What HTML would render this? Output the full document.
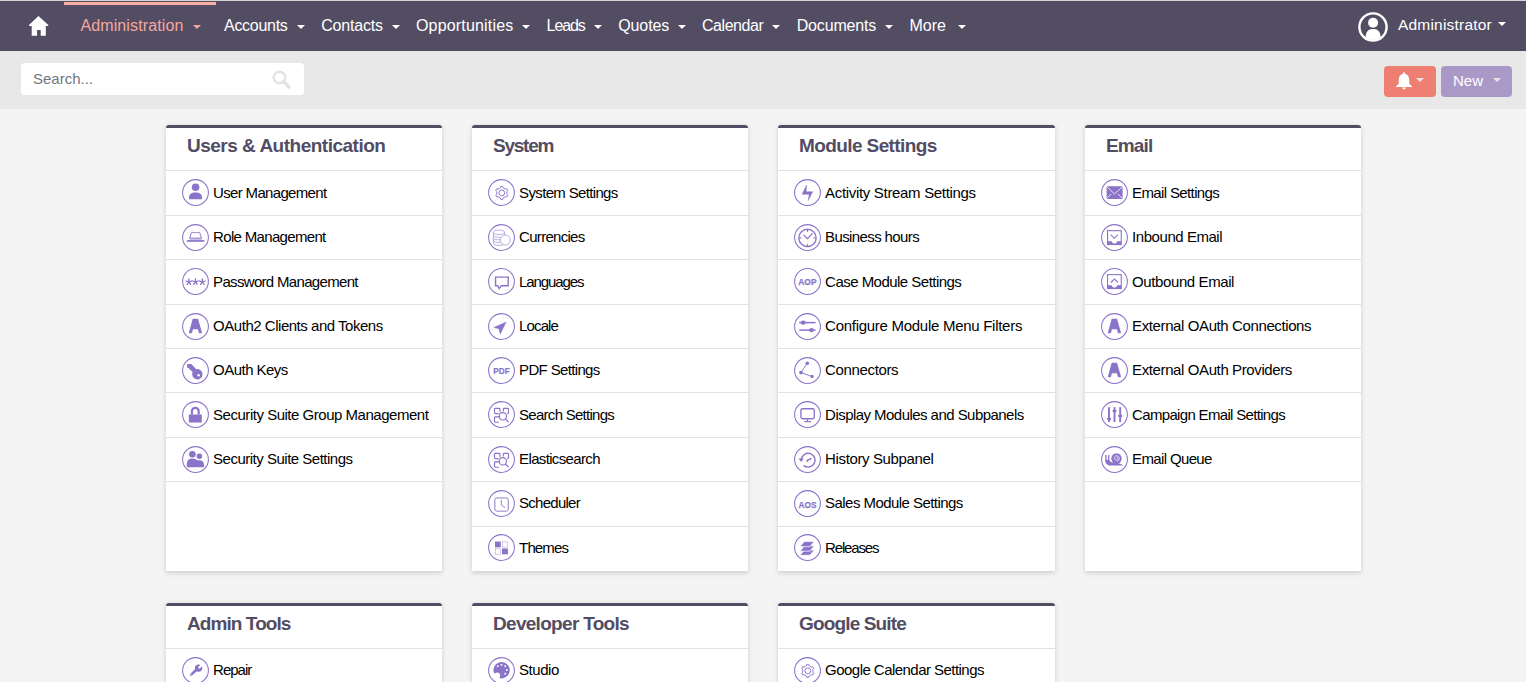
<!DOCTYPE html>
<html><head><meta charset="utf-8"><style>
*{box-sizing:border-box;margin:0;padding:0}
html,body{width:1526px;height:682px;overflow:hidden;background:#f4f4f4;font-family:"Liberation Sans",sans-serif}
#topline{position:absolute;left:0;top:0;width:1526px;height:1px;background:#d6d5d1}
#nav{position:absolute;left:0;top:1px;width:1526px;height:50px;background:#534d64}
#ul{position:absolute;left:64px;top:1px;width:152px;height:3px;background:#f9aea4}
.nt{position:absolute;top:15.4px;font-size:16px;line-height:20px;color:#fff;white-space:nowrap}
.nt.act{color:#f5a79d}
.caret{position:absolute;top:23.5px;width:0;height:0;border-left:4px solid transparent;border-right:4px solid transparent;border-top:4.5px solid #fff}
.caret.act{border-top-color:#f5a79d}
#home{position:absolute;left:29px;top:14px}
#user{position:absolute;left:1357px;top:10px}
#uname{position:absolute;left:1398px;top:13.5px;font-size:15.5px;letter-spacing:0.2px;line-height:20px;color:#fff;white-space:nowrap}
#ucaret{position:absolute;left:1498px;top:21px;border-left:4px solid transparent;border-right:4px solid transparent;border-top:4.5px solid #fff}
#bar{position:absolute;left:0;top:51px;width:1526px;height:57.5px;background:#e8e8e8}
#search{position:absolute;left:21px;top:63px;width:283px;height:32px;background:#fff;border-radius:4px}
#stext{position:absolute;left:12px;top:6px;font-size:15px;line-height:20px;color:#717680}
#sicon{position:absolute;left:251px;top:7px}
#bell{position:absolute;left:1384px;top:66px;width:52px;height:31px;background:#ef7f73;border-radius:4px}
#new{position:absolute;left:1441px;top:66px;width:71px;height:31px;background:#aa99c7;border-radius:4px}
#newt{position:absolute;left:12px;top:5px;font-size:15px;line-height:20px;color:#fff}
.bcaret{position:absolute;top:12px;border-left:4px solid transparent;border-right:4px solid transparent;border-top:4px solid #e6e6e6}
.card{position:absolute;background:#fff;border-top:3px solid #534d64;border-radius:3px 3px 0 0;box-shadow:0 1.5px 5px rgba(0,0,0,.16)}
.ct{position:absolute;left:21px;top:7.1px;font-size:19px;line-height:22px;letter-spacing:-0.5px;font-weight:700;color:#534d64;white-space:nowrap}
.sep{position:absolute;left:0;width:100%;height:1px;background:#dee2e6;margin-top:-3px}
.ic{position:absolute;left:16.2px;width:27px;height:27px;margin-top:-3px}
.ic svg{display:block}
.rt{position:absolute;left:47.1px;font-size:15px;line-height:20px;color:#000;white-space:nowrap;margin-top:-3px}
</style></head><body>
<div id="topline"></div>
<div id="nav">
<div id="ul"></div>
<svg id="home" width="20" height="21" viewBox="0 0 20 21"><path d="M9.5 1.1 L19.3 10 L19.3 10.9 L16.8 10.9 L16.8 20.8 L11.7 20.8 L11.7 15 L8.1 15 L8.1 20.8 L2.7 20.8 L2.7 10.9 L0 10.9 L0 10 Z" fill="#fff"/></svg>
<div class="nt act" style="left:80.4px;letter-spacing:0.12px">Administration</div><div class="caret act" style="left:192.5px"></div><div class="nt" style="left:224px;letter-spacing:-0.28px">Accounts</div><div class="caret" style="left:297px"></div><div class="nt" style="left:321.2px;letter-spacing:-0.2px">Contacts</div><div class="caret" style="left:392.3px"></div><div class="nt" style="left:416px;letter-spacing:0.17px">Opportunities</div><div class="caret" style="left:522.3px"></div><div class="nt" style="left:546.6px;letter-spacing:-1.1px">Leads</div><div class="caret" style="left:594px"></div><div class="nt" style="left:618.2px;letter-spacing:-0.1px">Quotes</div><div class="caret" style="left:678px"></div><div class="nt" style="left:702px;letter-spacing:-0.45px">Calendar</div><div class="caret" style="left:771.8px"></div><div class="nt" style="left:796.7px;letter-spacing:-0.16px">Documents</div><div class="caret" style="left:884.6px"></div><div class="nt" style="left:909.5px;letter-spacing:0px">More</div><div class="caret" style="left:958px"></div>
<svg id="user" width="32" height="32" viewBox="0 0 32 32"><circle cx="16" cy="16" r="13.6" fill="none" stroke="#fff" stroke-width="2.4"/><circle cx="16.1" cy="11.8" r="5" fill="#fff"/><path d="M8.6 26 C8.8 20.5 11.5 17.9 16.1 17.9 C20.7 17.9 23.4 20.5 23.6 26 C21.5 28 19 29 16.1 29 C13.2 29 10.7 28 8.6 26 Z" fill="#fff"/></svg>
<div id="uname">Administrator</div><div id="ucaret"></div>
</div>
<div id="bar"></div>
<div id="search"><div id="stext">Search...</div>
<svg id="sicon" width="20" height="20" viewBox="0 0 20 20"><circle cx="7.5" cy="7.5" r="5.8" fill="none" stroke="#e3e3e3" stroke-width="2.4"/><path d="M11.5 11.5 L17 17" stroke="#e3e3e3" stroke-width="3.4" stroke-linecap="round"/></svg>
</div>
<div id="bell"><svg style="position:absolute;left:11px;top:5.7px" width="18" height="18" viewBox="0 0 18 18"><path d="M9 0.3 C9.9 0.3 10.2 1.2 10.2 2 C13.2 2.7 14.3 5.3 14.3 8.5 L14.3 11.8 L17 14.3 Q17.3 14.9 16.6 15 L1.4 15 Q0.7 14.9 1 14.3 L3.7 11.8 L3.7 8.5 C3.7 5.3 4.8 2.7 7.8 2 C7.8 1.2 8.1 0.3 9 0.3 Z M7.3 15.6 L10.7 15.6 C10.7 16.8 10 17.4 9 17.4 C8 17.4 7.3 16.8 7.3 15.6Z" fill="#fff"/></svg><div class="bcaret" style="left:32px"></div></div>
<div id="new"><div id="newt">New</div><div class="bcaret" style="left:52px"></div></div>
<div class="card" style="left:166px;top:125px;width:276px;height:446px">
<div class="ct" style="letter-spacing:-0.50px">Users &amp; Authentication</div>
<div class="sep" style="top:45px"></div>
<div class="ic" style="top:54.00px"><svg width="27" height="27" viewBox="0 0 27 27"><circle cx="13.5" cy="13.5" r="12.9" fill="none" stroke="#8a73c9" stroke-width="1.05"/><circle cx="13.6" cy="8.3" r="3.8" fill="#8a73c9"/><path d="M7 20.3 L7 18.5 C7 15.3 9.3 13.4 13.6 13.4 C17.8 13.4 20 15.3 20 18.5 L20 20.3 Z" fill="#8a73c9"/></svg></div>
<div class="rt" style="top:58.00px;letter-spacing:-0.671px">User Management</div>
<div class="sep" style="top:90px"></div>
<div class="ic" style="top:99.00px"><svg width="27" height="27" viewBox="0 0 27 27"><circle cx="13.5" cy="13.5" r="12.9" fill="none" stroke="#8a73c9" stroke-width="1.05"/><path d="M7.7 14.2 L9.3 8.9 Q9.5 8.3 10.2 8.3 L12.4 8.5 Q13.5 9.2 14.6 8.5 L16.9 8.3 Q17.6 8.3 17.8 8.9 L19.4 14.2" fill="none" stroke="#8a73c9" stroke-width="0.95"/><rect x="7.4" y="14.2" width="12.3" height="2" fill="#8a73c9" opacity="0.45"/><line x1="7.4" y1="14.1" x2="19.7" y2="14.1" stroke="#8a73c9" stroke-width="0.9"/><rect x="4.8" y="16.1" width="17.6" height="1.7" fill="#8a73c9"/></svg></div>
<div class="rt" style="top:102.00px;letter-spacing:-0.672px">Role Management</div>
<div class="sep" style="top:134px"></div>
<div class="ic" style="top:143.00px"><svg width="27" height="27" viewBox="0 0 27 27"><circle cx="13.5" cy="13.5" r="12.9" fill="none" stroke="#8a73c9" stroke-width="1.05"/><line x1="6.9" y1="13.9" x2="6.90" y2="10.90" stroke="#8a73c9" stroke-width="1.25" stroke-linecap="round"/><line x1="6.9" y1="13.9" x2="9.75" y2="12.97" stroke="#8a73c9" stroke-width="1.25" stroke-linecap="round"/><line x1="6.9" y1="13.9" x2="8.66" y2="16.33" stroke="#8a73c9" stroke-width="1.25" stroke-linecap="round"/><line x1="6.9" y1="13.9" x2="5.14" y2="16.33" stroke="#8a73c9" stroke-width="1.25" stroke-linecap="round"/><line x1="6.9" y1="13.9" x2="4.05" y2="12.97" stroke="#8a73c9" stroke-width="1.25" stroke-linecap="round"/><line x1="13.5" y1="13.9" x2="13.50" y2="10.90" stroke="#8a73c9" stroke-width="1.25" stroke-linecap="round"/><line x1="13.5" y1="13.9" x2="16.35" y2="12.97" stroke="#8a73c9" stroke-width="1.25" stroke-linecap="round"/><line x1="13.5" y1="13.9" x2="15.26" y2="16.33" stroke="#8a73c9" stroke-width="1.25" stroke-linecap="round"/><line x1="13.5" y1="13.9" x2="11.74" y2="16.33" stroke="#8a73c9" stroke-width="1.25" stroke-linecap="round"/><line x1="13.5" y1="13.9" x2="10.65" y2="12.97" stroke="#8a73c9" stroke-width="1.25" stroke-linecap="round"/><line x1="20.3" y1="13.9" x2="20.30" y2="10.90" stroke="#8a73c9" stroke-width="1.25" stroke-linecap="round"/><line x1="20.3" y1="13.9" x2="23.15" y2="12.97" stroke="#8a73c9" stroke-width="1.25" stroke-linecap="round"/><line x1="20.3" y1="13.9" x2="22.06" y2="16.33" stroke="#8a73c9" stroke-width="1.25" stroke-linecap="round"/><line x1="20.3" y1="13.9" x2="18.54" y2="16.33" stroke="#8a73c9" stroke-width="1.25" stroke-linecap="round"/><line x1="20.3" y1="13.9" x2="17.45" y2="12.97" stroke="#8a73c9" stroke-width="1.25" stroke-linecap="round"/></svg></div>
<div class="rt" style="top:147.00px;letter-spacing:-0.678px">Password Management</div>
<div class="sep" style="top:179px"></div>
<div class="ic" style="top:188.00px"><svg width="27" height="27" viewBox="0 0 27 27"><circle cx="13.5" cy="13.5" r="12.9" fill="none" stroke="#8a73c9" stroke-width="1.05"/><g transform="translate(0,-0.45)"><path d="M10.7 6.2 L16 6.2 L19.9 19.6 Q20.1 20.8 19 20.8 L17.8 20.8 Q16.9 20.8 16.7 20 L16 16.6 L10.9 16.6 L10.1 20 Q9.9 20.8 9 20.8 L7.9 20.8 Q6.8 20.8 7 19.6 Z" fill="#8a73c9"/></g></svg></div>
<div class="rt" style="top:191.00px;letter-spacing:-0.475px">OAuth2 Clients and Tokens</div>
<div class="sep" style="top:223px"></div>
<div class="ic" style="top:232.00px"><svg width="27" height="27" viewBox="0 0 27 27"><circle cx="13.5" cy="13.5" r="12.9" fill="none" stroke="#8a73c9" stroke-width="1.05"/><path d="M5.13 6.98 L9.3 6.98 L14.2 12.2 A5.2 5.2 0 1 1 10.6 15.1 L8 12.5 L7.1 12.5 L7.1 11 L5.13 10.75 Z" fill="#8a73c9"/><circle cx="16.58" cy="18.2" r="1.25" fill="#fff"/></svg></div>
<div class="rt" style="top:235.00px;letter-spacing:-0.533px">OAuth Keys</div>
<div class="sep" style="top:267px"></div>
<div class="ic" style="top:276.00px"><svg width="27" height="27" viewBox="0 0 27 27"><circle cx="13.5" cy="13.5" r="12.9" fill="none" stroke="#8a73c9" stroke-width="1.05"/><rect x="6.8" y="13.4" width="13" height="8" fill="#8a73c9" rx="0.3"/><path d="M9.9 13.6 V10.2 A3.4 3.4 0 0 1 16.7 10.2 V13.6" fill="none" stroke="#8a73c9" stroke-width="2.2"/></svg></div>
<div class="rt" style="top:280.00px;letter-spacing:-0.48px">Security Suite Group Management</div>
<div class="sep" style="top:312px"></div>
<div class="ic" style="top:321.00px"><svg width="27" height="27" viewBox="0 0 27 27"><circle cx="13.5" cy="13.5" r="12.9" fill="none" stroke="#8a73c9" stroke-width="1.05"/><circle cx="10.4" cy="8.3" r="3.3" fill="#8a73c9"/><circle cx="17.4" cy="10.3" r="2.75" fill="#8a73c9"/><path d="M4.8 20.5 L4.8 18.3 C4.8 14.5 7 12.5 10.4 12.5 C12.8 12.5 14.4 13.4 15.4 14.6 C16 14.4 16.7 14.3 17.4 14.3 C20.3 14.3 22 16.2 22 18.8 L22 20.5 Q22 21.3 21.2 21.3 L5.6 21.3 Q4.8 21.3 4.8 20.5 Z" fill="#8a73c9"/></svg></div>
<div class="rt" style="top:324.00px;letter-spacing:-0.5px">Security Suite Settings</div>
<div class="sep" style="top:356px"></div>
</div><div class="card" style="left:472px;top:125px;width:276px;height:446px">
<div class="ct" style="letter-spacing:-1.24px">System</div>
<div class="sep" style="top:45px"></div>
<div class="ic" style="top:54.00px"><svg width="27" height="27" viewBox="0 0 27 27"><circle cx="13.5" cy="13.5" r="12.9" fill="none" stroke="#8a73c9" stroke-width="1.05"/><path d="M12.43 8.78 L12.78 7.48 L14.82 7.48 L15.17 8.78 L17.55 10.15 L18.85 9.81 L19.87 11.57 L18.92 12.53 L18.92 15.27 L19.87 16.23 L18.85 17.99 L17.55 17.65 L15.17 19.02 L14.82 20.32 L12.78 20.32 L12.43 19.02 L10.05 17.65 L8.75 17.99 L7.73 16.23 L8.68 15.27 L8.68 12.53 L7.73 11.57 L8.75 9.81 L10.05 10.15Z" fill="none" stroke="#8a73c9" stroke-width="0.95" stroke-linejoin="round"/><circle cx="13.8" cy="13.9" r="2.9" fill="none" stroke="#8a73c9" stroke-width="0.95"/></svg></div>
<div class="rt" style="top:58.00px;letter-spacing:-0.657px">System Settings</div>
<div class="sep" style="top:90px"></div>
<div class="ic" style="top:99.00px"><svg width="27" height="27" viewBox="0 0 27 27"><circle cx="13.5" cy="13.5" r="12.9" fill="none" stroke="#8a73c9" stroke-width="1.05"/><g fill="none" stroke="#8a73c9" stroke-width="0.65" opacity="0.85"><ellipse cx="11" cy="8.3" rx="5.6" ry="2.3"/><path d="M5.4 8.3 V19.2 C5.4 20.5 7.9 21.4 11 21.4 C12.5 21.4 13.8 21.2 14.8 20.8"/><path d="M5.4 11 C5.4 12.3 7.9 13.3 11 13.3 C11.6 13.3 12.2 13.25 12.8 13.2"/><path d="M5.4 13.7 C5.4 15 7.9 15.9 11 15.9 L12 15.9"/><path d="M5.4 16.4 C5.4 17.7 7.9 18.6 11 18.6 L12.3 18.6"/><path d="M16.6 8.3 V11"/><circle cx="17.3" cy="16.1" r="5"/></g></svg></div>
<div class="rt" style="top:102.00px;letter-spacing:-0.711px">Currencies</div>
<div class="sep" style="top:134px"></div>
<div class="ic" style="top:143.00px"><svg width="27" height="27" viewBox="0 0 27 27"><circle cx="13.5" cy="13.5" r="12.9" fill="none" stroke="#8a73c9" stroke-width="1.05"/><path d="M7.55 9.1 H20.2 V17.8 H13.3 L11.2 20.6 L9.6 17.8 H7.55 Z" fill="none" stroke="#8a73c9" stroke-width="1.4" stroke-linejoin="miter"/></svg></div>
<div class="rt" style="top:147.00px;letter-spacing:-1.1px">Languages</div>
<div class="sep" style="top:179px"></div>
<div class="ic" style="top:188.00px"><svg width="27" height="27" viewBox="0 0 27 27"><circle cx="13.5" cy="13.5" r="12.9" fill="none" stroke="#8a73c9" stroke-width="1.05"/><path d="M18.1 8.9 L5.8 14.6 L11 15.8 L12.2 21.2 Z" fill="#8a73c9" stroke="#8a73c9" stroke-width="0.4" stroke-linejoin="round"/></svg></div>
<div class="rt" style="top:191.00px;letter-spacing:-0.88px">Locale</div>
<div class="sep" style="top:223px"></div>
<div class="ic" style="top:232.00px"><svg width="27" height="27" viewBox="0 0 27 27"><circle cx="13.5" cy="13.5" r="12.9" fill="none" stroke="#8a73c9" stroke-width="1.05"/><text x="13.5" y="16.5" text-anchor="middle" font-family="Liberation Sans" font-weight="700" font-size="9.2" fill="#8a73c9" stroke="#8a73c9" stroke-width="0.2" textLength="16.4" lengthAdjust="spacingAndGlyphs">PDF</text></svg></div>
<div class="rt" style="top:235.00px;letter-spacing:-0.654px">PDF Settings</div>
<div class="sep" style="top:267px"></div>
<div class="ic" style="top:276.00px"><svg width="27" height="27" viewBox="0 0 27 27"><circle cx="13.5" cy="13.5" r="12.9" fill="none" stroke="#8a73c9" stroke-width="1.05"/><g fill="none" stroke="#8a73c9" stroke-width="1.15"><path d="M12 11.3 V8.2 Q12 7.3 11.1 7.3 H7.4 Q6.5 7.3 6.5 8.2 V11.7 Q6.5 12.6 7.4 12.6 H10.6"/><path d="M15.3 10.4 V8.2 Q15.3 7.3 16.2 7.3 H19.6 Q20.5 7.3 20.5 8.2 V11.7 Q20.5 12.6 19.6 12.6 H19.3"/><path d="M12.2 15.9 H7.4 Q6.5 15.9 6.5 16.8 V20.3 Q6.5 21.2 7.4 21.2 H10.8"/><circle cx="14.8" cy="15.3" r="3.7"/><line x1="17.5" y1="18" x2="20.5" y2="21"/></g></svg></div>
<div class="rt" style="top:280.00px;letter-spacing:-0.728px">Search Settings</div>
<div class="sep" style="top:312px"></div>
<div class="ic" style="top:321.00px"><svg width="27" height="27" viewBox="0 0 27 27"><circle cx="13.5" cy="13.5" r="12.9" fill="none" stroke="#8a73c9" stroke-width="1.05"/><g fill="none" stroke="#8a73c9" stroke-width="1.15"><path d="M12 11.3 V8.2 Q12 7.3 11.1 7.3 H7.4 Q6.5 7.3 6.5 8.2 V11.7 Q6.5 12.6 7.4 12.6 H10.6"/><path d="M15.3 10.4 V8.2 Q15.3 7.3 16.2 7.3 H19.6 Q20.5 7.3 20.5 8.2 V11.7 Q20.5 12.6 19.6 12.6 H19.3"/><path d="M12.2 15.9 H7.4 Q6.5 15.9 6.5 16.8 V20.3 Q6.5 21.2 7.4 21.2 H10.8"/><circle cx="14.8" cy="15.3" r="3.7"/><line x1="17.5" y1="18" x2="20.5" y2="21"/></g></svg></div>
<div class="rt" style="top:324.00px;letter-spacing:-0.65px">Elasticsearch</div>
<div class="sep" style="top:356px"></div>
<div class="ic" style="top:365.00px"><svg width="27" height="27" viewBox="0 0 27 27"><circle cx="13.5" cy="13.5" r="12.9" fill="none" stroke="#8a73c9" stroke-width="1.05"/><rect x="6.85" y="7.95" width="13.4" height="13.2" rx="1.9" fill="none" stroke="#8a73c9" stroke-width="0.95"/><path d="M13.3 9.9 V15 L17.2 17.8" fill="none" stroke="#8a73c9" stroke-width="0.9"/></svg></div>
<div class="rt" style="top:368.00px;letter-spacing:-0.75px">Scheduler</div>
<div class="sep" style="top:401px"></div>
<div class="ic" style="top:409.00px"><svg width="27" height="27" viewBox="0 0 27 27"><circle cx="13.5" cy="13.5" r="12.9" fill="none" stroke="#8a73c9" stroke-width="1.05"/><g transform="translate(0,-0.5)"><rect x="7" y="8" width="5.8" height="5.8" fill="#8a73c9"/><rect x="14.3" y="8.3" width="5.3" height="5.3" fill="none" stroke="#8a73c9" stroke-width="0.6" opacity="0.65"/><rect x="7.3" y="15.3" width="5.3" height="5.4" fill="none" stroke="#8a73c9" stroke-width="0.6" opacity="0.65"/><rect x="14" y="15" width="5.9" height="5.8" fill="#8a73c9"/></g></svg></div>
<div class="rt" style="top:413.00px;letter-spacing:-0.88px">Themes</div>
</div><div class="card" style="left:778px;top:125px;width:277px;height:446px">
<div class="ct" style="letter-spacing:-0.60px">Module Settings</div>
<div class="sep" style="top:45px"></div>
<div class="ic" style="top:54.00px"><svg width="27" height="27" viewBox="0 0 27 27"><circle cx="13.5" cy="13.5" r="12.9" fill="none" stroke="#8a73c9" stroke-width="1.05"/><path d="M12.5 6.2 L8 15.2 L15.2 15.2 L14.2 21.5 L18.7 12.7 L12.2 12.7 Z" fill="#8a73c9" stroke="#8a73c9" stroke-width="0.45" stroke-linejoin="round"/></svg></div>
<div class="rt" style="top:58.00px;letter-spacing:-0.322px">Activity Stream Settings</div>
<div class="sep" style="top:90px"></div>
<div class="ic" style="top:99.00px"><svg width="27" height="27" viewBox="0 0 27 27"><circle cx="13.5" cy="13.5" r="12.9" fill="none" stroke="#8a73c9" stroke-width="1.05"/><circle cx="13.5" cy="13.9" r="8.65" fill="none" stroke="#8a73c9" stroke-width="1.3"/><g stroke="#8a73c9" stroke-width="1.2"><line x1="13.5" y1="5.5" x2="13.5" y2="7.8"/><line x1="13.5" y1="20" x2="13.5" y2="22.3"/><line x1="5.1" y1="13.9" x2="7.4" y2="13.9"/><line x1="19.6" y1="13.9" x2="21.9" y2="13.9"/></g><path d="M9.6 10.9 L13.4 14.6 L18.6 9.4" fill="none" stroke="#8a73c9" stroke-width="1.3"/></svg></div>
<div class="rt" style="top:102.00px;letter-spacing:-0.615px">Business hours</div>
<div class="sep" style="top:134px"></div>
<div class="ic" style="top:143.00px"><svg width="27" height="27" viewBox="0 0 27 27"><circle cx="13.5" cy="13.5" r="12.9" fill="none" stroke="#8a73c9" stroke-width="1.05"/><text x="13.4" y="16.5" text-anchor="middle" font-family="Liberation Sans" font-weight="700" font-size="9" fill="#8a73c9" stroke="#8a73c9" stroke-width="0.25" textLength="18.2" lengthAdjust="spacingAndGlyphs">AOP</text></svg></div>
<div class="rt" style="top:147.00px;letter-spacing:-0.526px">Case Module Settings</div>
<div class="sep" style="top:179px"></div>
<div class="ic" style="top:188.00px"><svg width="27" height="27" viewBox="0 0 27 27"><circle cx="13.5" cy="13.5" r="12.9" fill="none" stroke="#8a73c9" stroke-width="1.05"/><g transform="translate(0,-0.6)"><g stroke="#8a73c9" stroke-width="1.5" fill="#8a73c9"><line x1="5.2" y1="10.2" x2="21.6" y2="10.2"/><line x1="5.2" y1="17.7" x2="21.6" y2="17.7"/></g><ellipse cx="9.2" cy="10.2" rx="2.4" ry="2.2" fill="#8a73c9"/><ellipse cx="17.5" cy="17.7" rx="2.4" ry="2.2" fill="#8a73c9"/></g></svg></div>
<div class="rt" style="top:191.00px;letter-spacing:-0.278px">Configure Module Menu Filters</div>
<div class="sep" style="top:223px"></div>
<div class="ic" style="top:232.00px"><svg width="27" height="27" viewBox="0 0 27 27"><circle cx="13.5" cy="13.5" r="12.9" fill="none" stroke="#8a73c9" stroke-width="1.05"/><g stroke="#8a73c9" stroke-width="0.95"><line x1="13.3" y1="6.3" x2="6.9" y2="15.6"/><line x1="6.9" y1="15.6" x2="18.1" y2="19.5"/></g><circle cx="13.3" cy="6.3" r="1.8" fill="#8a73c9"/><circle cx="6.9" cy="15.6" r="1.8" fill="#8a73c9"/><circle cx="18.1" cy="19.5" r="1.65" fill="#8a73c9"/></svg></div>
<div class="rt" style="top:235.00px;letter-spacing:-0.355px">Connectors</div>
<div class="sep" style="top:267px"></div>
<div class="ic" style="top:276.00px"><svg width="27" height="27" viewBox="0 0 27 27"><circle cx="13.5" cy="13.5" r="12.9" fill="none" stroke="#8a73c9" stroke-width="1.05"/><rect x="6.9" y="7.75" width="13.4" height="10" rx="1.8" fill="none" stroke="#8a73c9" stroke-width="1.35"/><line x1="13.5" y1="17.8" x2="13.5" y2="20.3" stroke="#8a73c9" stroke-width="1.1"/><line x1="10.2" y1="20.6" x2="17" y2="20.6" stroke="#8a73c9" stroke-width="1.2"/></svg></div>
<div class="rt" style="top:280.00px;letter-spacing:-0.543px">Display Modules and Subpanels</div>
<div class="sep" style="top:312px"></div>
<div class="ic" style="top:321.00px"><svg width="27" height="27" viewBox="0 0 27 27"><circle cx="13.5" cy="13.5" r="12.9" fill="none" stroke="#8a73c9" stroke-width="1.05"/><path d="M7.3 13.2 A6.9 6.9 0 1 1 9.6 19.4" fill="none" stroke="#8a73c9" stroke-width="1.4"/><path d="M4.6 12.4 L9.6 12.4 L7.2 16 Z" fill="#8a73c9"/><path d="M12.9 16 L13.3 14.3 L17.5 12.3" fill="none" stroke="#8a73c9" stroke-width="1.4"/></svg></div>
<div class="rt" style="top:324.00px;letter-spacing:-0.373px">History Subpanel</div>
<div class="sep" style="top:356px"></div>
<div class="ic" style="top:365.00px"><svg width="27" height="27" viewBox="0 0 27 27"><circle cx="13.5" cy="13.5" r="12.9" fill="none" stroke="#8a73c9" stroke-width="1.05"/><text x="13.5" y="17.6" text-anchor="middle" font-family="Liberation Sans" font-weight="700" font-size="9" fill="#8a73c9" stroke="#8a73c9" stroke-width="0.25" textLength="17.8" lengthAdjust="spacingAndGlyphs">AOS</text></svg></div>
<div class="rt" style="top:368.00px;letter-spacing:-0.55px">Sales Module Settings</div>
<div class="sep" style="top:401px"></div>
<div class="ic" style="top:409.00px"><svg width="27" height="27" viewBox="0 0 27 27"><circle cx="13.5" cy="13.5" r="12.9" fill="none" stroke="#8a73c9" stroke-width="1.05"/><g fill="#8a73c9" stroke="#fff" stroke-width="0.75"><path d="M6 21.3 L15.9 21.3 L20.3 16 L10.4 16 Z"/><path d="M6 17.2 L15.9 17.2 L20.3 11.8 L10.4 11.8 Z"/><path d="M6 12.7 L15.9 12.7 L20.3 7.4 L10.4 7.4 Z"/></g></svg></div>
<div class="rt" style="top:413.00px;letter-spacing:-1.171px">Releases</div>
</div><div class="card" style="left:1085px;top:125px;width:276px;height:446px">
<div class="ct" style="letter-spacing:-0.88px">Email</div>
<div class="sep" style="top:45px"></div>
<div class="ic" style="top:54.00px"><svg width="27" height="27" viewBox="0 0 27 27"><circle cx="13.5" cy="13.5" r="12.9" fill="none" stroke="#8a73c9" stroke-width="1.05"/><rect x="5.6" y="7.2" width="16" height="12.9" rx="0.9" fill="#8a73c9"/><g stroke="#fff" stroke-width="0.8" fill="none"><path d="M5.8 7.8 L13.5 14.9 L21.4 7.8"/><line x1="5.8" y1="19.4" x2="10.2" y2="15"/><line x1="21.4" y1="19.4" x2="17" y2="15"/></g></svg></div>
<div class="rt" style="top:58.00px;letter-spacing:-0.631px">Email Settings</div>
<div class="sep" style="top:90px"></div>
<div class="ic" style="top:99.00px"><svg width="27" height="27" viewBox="0 0 27 27"><circle cx="13.5" cy="13.5" r="12.9" fill="none" stroke="#8a73c9" stroke-width="1.05"/><rect x="6.55" y="6.65" width="13.7" height="13.9" fill="none" stroke="#8a73c9" stroke-width="1.1"/><path d="M6.5 17.3 H10.6 C11.2 19 12 19.6 13.4 19.6 C14.8 19.6 15.6 19 16.2 17.3 H20.3 V21 H6.5 Z" fill="#8a73c9"/><path d="M9.75 10.7 L13.3 14.3 L16.8 10.7" fill="none" stroke="#8a73c9" stroke-width="1.1"/></svg></div>
<div class="rt" style="top:102.00px;letter-spacing:-0.45px">Inbound Email</div>
<div class="sep" style="top:134px"></div>
<div class="ic" style="top:143.00px"><svg width="27" height="27" viewBox="0 0 27 27"><circle cx="13.5" cy="13.5" r="12.9" fill="none" stroke="#8a73c9" stroke-width="1.05"/><rect x="6.55" y="6.65" width="13.7" height="13.9" fill="none" stroke="#8a73c9" stroke-width="1.1"/><path d="M6.5 17.3 H10.6 C11.2 19 12 19.6 13.4 19.6 C14.8 19.6 15.6 19 16.2 17.3 H20.3 V21 H6.5 Z" fill="#8a73c9"/><path d="M9.9 14.5 L13.45 11 L17 14.5" fill="none" stroke="#8a73c9" stroke-width="1.1"/></svg></div>
<div class="rt" style="top:147.00px;letter-spacing:-0.4px">Outbound Email</div>
<div class="sep" style="top:179px"></div>
<div class="ic" style="top:188.00px"><svg width="27" height="27" viewBox="0 0 27 27"><circle cx="13.5" cy="13.5" r="12.9" fill="none" stroke="#8a73c9" stroke-width="1.05"/><g transform="translate(0,-0.45)"><path d="M10.7 6.2 L16 6.2 L19.9 19.6 Q20.1 20.8 19 20.8 L17.8 20.8 Q16.9 20.8 16.7 20 L16 16.6 L10.9 16.6 L10.1 20 Q9.9 20.8 9 20.8 L7.9 20.8 Q6.8 20.8 7 19.6 Z" fill="#8a73c9"/></g></svg></div>
<div class="rt" style="top:191.00px;letter-spacing:-0.392px">External OAuth Connections</div>
<div class="sep" style="top:223px"></div>
<div class="ic" style="top:232.00px"><svg width="27" height="27" viewBox="0 0 27 27"><circle cx="13.5" cy="13.5" r="12.9" fill="none" stroke="#8a73c9" stroke-width="1.05"/><g transform="translate(0,-0.45)"><path d="M10.7 6.2 L16 6.2 L19.9 19.6 Q20.1 20.8 19 20.8 L17.8 20.8 Q16.9 20.8 16.7 20 L16 16.6 L10.9 16.6 L10.1 20 Q9.9 20.8 9 20.8 L7.9 20.8 Q6.8 20.8 7 19.6 Z" fill="#8a73c9"/></g></svg></div>
<div class="rt" style="top:235.00px;letter-spacing:-0.391px">External OAuth Providers</div>
<div class="sep" style="top:267px"></div>
<div class="ic" style="top:276.00px"><svg width="27" height="27" viewBox="0 0 27 27"><circle cx="13.5" cy="13.5" r="12.9" fill="none" stroke="#8a73c9" stroke-width="1.05"/><g stroke="#8a73c9" stroke-width="1.9"><line x1="8" y1="6.2" x2="8" y2="21"/><line x1="13.5" y1="6.2" x2="13.5" y2="21"/><line x1="19.2" y1="6.2" x2="19.2" y2="21"/></g><g fill="#8a73c9"><ellipse cx="8" cy="18" rx="2.1" ry="1.4"/><ellipse cx="13.5" cy="10.1" rx="2.2" ry="1.4"/><ellipse cx="19.2" cy="14.9" rx="2.2" ry="1.4"/></g></svg></div>
<div class="rt" style="top:280.00px;letter-spacing:-0.673px">Campaign Email Settings</div>
<div class="sep" style="top:312px"></div>
<div class="ic" style="top:321.00px"><svg width="27" height="27" viewBox="0 0 27 27"><circle cx="13.5" cy="13.5" r="12.9" fill="none" stroke="#8a73c9" stroke-width="1.05"/><path d="M4.2 9 H5.5 V13.4 C5.9 13.9 6.6 13.9 7.1 13.4 V9 H8.4 V14.3 C9.1 15.6 10.2 16.2 11.4 16.5 L15.5 16.9 C18.2 17.1 20.3 17.8 22.1 19.4 L9.8 19.6 C6.5 19.6 4.2 17.6 4.2 14.6 Z" fill="#8a73c9"/><circle cx="15.5" cy="12.5" r="5.2" fill="#8a73c9"/><path d="M15.9 15.2 C17.4 15.2 18.3 14 18.3 12.5 C18.3 11 17.2 9.8 15.6 9.8 C14.2 9.8 13.2 10.8 13.2 12.1 C13.2 13.3 14.1 14.1 15.2 14.1 C16.1 14.1 16.9 13.4 16.9 12.5 C16.9 11.7 16.3 11.1 15.5 11.1" fill="none" stroke="#fff" stroke-width="0.75"/></svg></div>
<div class="rt" style="top:324.00px;letter-spacing:-0.64px">Email Queue</div>
<div class="sep" style="top:356px"></div>
</div><div class="card" style="left:166px;top:603px;width:276px;height:157px">
<div class="ct" style="letter-spacing:-0.92px">Admin Tools</div>
<div class="sep" style="top:45px"></div>
<div class="ic" style="top:54.00px"><svg width="27" height="27" viewBox="0 0 27 27"><circle cx="13.5" cy="13.5" r="12.9" fill="none" stroke="#8a73c9" stroke-width="1.05"/><path d="M9.1 17.6 L15 12.2" stroke="#8a73c9" stroke-width="2.6" stroke-linecap="round"/><circle cx="16.6" cy="11.1" r="3.7" fill="#8a73c9"/><line x1="17.3" y1="10.4" x2="21.2" y2="6.5" stroke="#fff" stroke-width="2.1" stroke-linecap="round"/><circle cx="9.1" cy="17.6" r="0.6" fill="#fff"/></svg></div>
<div class="rt" style="top:57.00px;letter-spacing:-1.0px">Repair</div>
<div class="sep" style="top:89.39999999999998px"></div>
</div><div class="card" style="left:472px;top:603px;width:276px;height:157px">
<div class="ct" style="letter-spacing:-0.70px">Developer Tools</div>
<div class="sep" style="top:45px"></div>
<div class="ic" style="top:54.00px"><svg width="27" height="27" viewBox="0 0 27 27"><circle cx="13.5" cy="13.5" r="12.9" fill="none" stroke="#8a73c9" stroke-width="1.05"/><path d="M13.7 5.05 A8.15 8.15 0 1 1 11.2 21.0 C12.4 19.8 12.6 18 11.6 16.6 C10.6 15.3 8.6 15.1 7.3 16.2 L5.9 15.9 A8.15 8.15 0 0 1 13.7 5.05 Z" fill="#8a73c9"/><g fill="#fff"><rect x="8.9" y="8.35" width="1.7" height="1.7"/><rect x="12.65" y="7.05" width="1.7" height="1.7"/><rect x="16.35" y="8.35" width="1.7" height="1.7"/><rect x="17.95" y="12.15" width="1.7" height="1.7"/><rect x="16.35" y="15.85" width="1.7" height="1.7"/></g></svg></div>
<div class="rt" style="top:57.00px;letter-spacing:-0.48px">Studio</div>
<div class="sep" style="top:89.39999999999998px"></div>
</div><div class="card" style="left:778px;top:603px;width:277px;height:157px">
<div class="ct" style="letter-spacing:-0.85px">Google Suite</div>
<div class="sep" style="top:45px"></div>
<div class="ic" style="top:54.00px"><svg width="27" height="27" viewBox="0 0 27 27"><circle cx="13.5" cy="13.5" r="12.9" fill="none" stroke="#8a73c9" stroke-width="1.05"/><path d="M12.43 8.78 L12.78 7.48 L14.82 7.48 L15.17 8.78 L17.55 10.15 L18.85 9.81 L19.87 11.57 L18.92 12.53 L18.92 15.27 L19.87 16.23 L18.85 17.99 L17.55 17.65 L15.17 19.02 L14.82 20.32 L12.78 20.32 L12.43 19.02 L10.05 17.65 L8.75 17.99 L7.73 16.23 L8.68 15.27 L8.68 12.53 L7.73 11.57 L8.75 9.81 L10.05 10.15Z" fill="none" stroke="#8a73c9" stroke-width="0.95" stroke-linejoin="round"/><circle cx="13.8" cy="13.9" r="2.9" fill="none" stroke="#8a73c9" stroke-width="0.95"/></svg></div>
<div class="rt" style="top:57.00px;letter-spacing:-0.539px">Google Calendar Settings</div>
<div class="sep" style="top:89.39999999999998px"></div>
</div>
</body></html>
